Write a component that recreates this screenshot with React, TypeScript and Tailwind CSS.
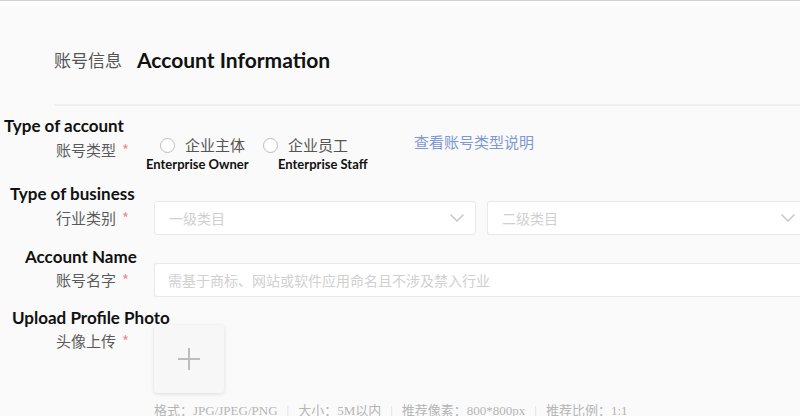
import React from "react";

const EN = { fontFamily: "Lato, 'Open Sans', sans-serif" };
const CN = { fontFamily: "'Noto Sans CJK SC', 'Noto Sans', sans-serif" };

function Chevron() {
  return (
    <svg width="16" height="10" viewBox="0 0 16 10" fill="none">
      <path d="M1.5 1.5 L8 8 L14.5 1.5" stroke="#c4c4c4" strokeWidth="1.4" />
    </svg>
  );
}

function CnLabel({ text }: { text: string }) {
  return (
    <div
      className="w-[129px] shrink-0 text-right text-[15px] text-[#5a5a5a] leading-[20px]"
      style={CN}
    >
      {text}
      <span className="text-[#f08a8a] ml-[6px]">*</span>
    </div>
  );
}

function Radio({ cn }: { cn: string }) {
  return (
    <div className="flex items-center gap-[10px] h-[18px]">
      <span className="w-[15px] h-[15px] rounded-full border border-[#bdbdbd] bg-white" />
      <span className="text-[15px] text-[#555] leading-[18px]" style={CN}>
        {cn}
      </span>
    </div>
  );
}

export default function App() {
  return (
    <div className="w-[800px] h-[416px] overflow-hidden bg-[#fafafa] border-t border-[#d2d2d2]">
      <div className="h-[8px] bg-gradient-to-b from-white to-[#fafafa]" />
      <div className="pt-[39px] pl-[54px] flex items-center h-[63px] gap-[15px]">
        <span className="text-[17px] text-[#555] leading-[24px]" style={CN}>
          账号信息
        </span>
        <span className="text-[21px] font-bold text-[#111] leading-[24px]" style={EN}>
          Account Information
        </span>
      </div>
      <div className="mt-[32px] ml-[54px] h-[2px] bg-[#efefef]" />

      {/* Type of account */}
      <div className="mt-[10px]">
        <div className="pl-[4px] h-[20px] leading-[20px] text-[17px] font-bold text-[#111]" style={EN}>
          Type of account
        </div>
        <div className="flex items-start">
          <div className="pt-[4px]">
            <CnLabel text="账号类型" />
          </div>
          <div className="ml-[-129px] pl-[146px] flex flex-col">
            <div className="flex items-start pl-[14px]">
              <Radio cn="企业主体" />
              <div className="ml-[18px]">
                <Radio cn="企业员工" />
              </div>
              <div className="ml-[66px] text-[15px] text-[#7c98d6] leading-[18px] -mt-[3px]" style={CN}>
                查看账号类型说明
              </div>
            </div>
            <div className="flex mt-[1px] text-[13px] font-bold text-[#111] leading-[18px] whitespace-nowrap" style={EN}>
              <span className="w-[132px]">Enterprise Owner</span>
              <span>Enterprise Staff</span>
            </div>
          </div>
        </div>
      </div>

      {/* Type of business */}
      <div className="mt-[11px]">
        <div className="pl-[10px] h-[20px] leading-[20px] text-[17px] font-bold text-[#111]" style={EN}>
          Type of business
        </div>
        <div className="flex items-center -mt-[3px]">
          <CnLabel text="行业类别" />
          <div className="ml-[25px] flex gap-[11px] flex-1">
            <div className="w-[322px] h-[34px] bg-white border border-[#e9e9e9] rounded-[3px] flex items-center justify-between pl-[14px] pr-[10px]">
              <span className="text-[14px] text-[#d0d0d0]" style={CN}>一级类目</span>
              <Chevron />
            </div>
            <div className="flex-1 h-[34px] bg-white border border-[#e9e9e9] border-r-0 rounded-l-[3px] flex items-center justify-between pl-[14px] pr-[4px]">
              <span className="text-[14px] text-[#d0d0d0]" style={CN}>二级类目</span>
              <Chevron />
            </div>
          </div>
        </div>
      </div>

      {/* Account Name */}
      <div className="mt-[12px]">
        <div className="pl-[25px] h-[20px] leading-[20px] text-[17px] font-bold text-[#111]" style={EN}>
          Account Name
        </div>
        <div className="flex items-center -mt-[4px]">
          <CnLabel text="账号名字" />
          <div className="ml-[25px] flex-1 h-[34px] bg-white border border-[#e9e9e9] border-r-0 rounded-l-[3px] flex items-center pl-[13px]">
            <span className="text-[14px] text-[#d0d0d0]" style={CN}>
              需基于商标、网站或软件应用命名且不涉及禁入行业
            </span>
          </div>
        </div>
      </div>

      {/* Upload */}
      <div className="mt-[11px]">
        <div className="pl-[12px] h-[20px] leading-[20px] text-[17px] font-bold text-[#111]" style={EN}>
          Upload Profile Photo
        </div>
        <div className="flex items-start -mt-[3px]">
          <div className="pt-[6px]">
            <CnLabel text="头像上传" />
          </div>
          <div className="ml-[25px] flex flex-col">
            <div className="w-[70px] h-[68px] bg-[#f7f7f7] rounded-[4px] shadow-[0_1px_4px_rgba(0,0,0,0.12)] flex items-center justify-center">
              <svg width="24" height="24" viewBox="0 0 24 24">
                <path d="M12 1 V23 M1 12 H23" stroke="#bdbdbd" strokeWidth="2" />
              </svg>
            </div>
            <div
              className="mt-[10px] text-[13px] text-[#b5b5b5] leading-[16px] whitespace-nowrap flex gap-[9px]"
              style={{ fontFamily: "'Liberation Serif', 'Noto Sans CJK SC', serif" }}
            >
              <span>格式：JPG/JPEG/PNG</span>
              <span className="text-[#dcdcdc]">|</span>
              <span>大小：5M以内</span>
              <span className="text-[#dcdcdc]">|</span>
              <span>推荐像素：800*800px</span>
              <span className="text-[#dcdcdc]">|</span>
              <span>推荐比例：1:1</span>
            </div>
          </div>
        </div>
      </div>
    </div>
  );
}
